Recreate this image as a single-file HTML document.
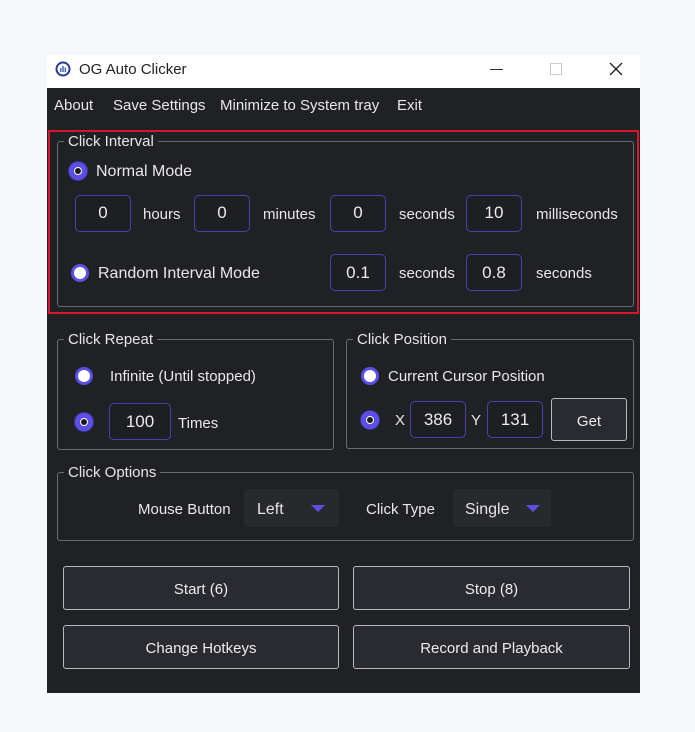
<!DOCTYPE html>
<html><head><style>
*{margin:0;padding:0;box-sizing:border-box}
body{width:695px;height:732px;background:#f5f9fc;position:relative;font-family:"Liberation Sans",sans-serif;overflow:hidden}
.a{position:absolute}
#win{left:47px;top:55px;width:593px;height:638px;background:#202124}
#title{left:47px;top:55px;width:593px;height:33px;background:#fff}
.t{position:absolute;color:#e8e8e8;font-size:15px;white-space:nowrap;line-height:18px}
.grp{position:absolute;border:1px solid #6a6b6e;border-radius:3px}
.gl{position:absolute;background:#202124;padding:0 4px;color:#e6e6e6;font-size:15px;line-height:18px}
.box{position:absolute;border:1.5px solid #4b3fb0;border-radius:5px;color:#ececec;font-size:17px;text-align:center;background:#1e1f22}
.rs{position:absolute;width:18px;height:18px;border-radius:50%;background:#fff;border:5px solid #5b4fe6;box-shadow:0 0 0 1px #3d3499}
.rs::after{content:"";position:absolute;left:1px;top:1px;width:6px;height:6px;border-radius:50%;background:#1a1a1e}
.ru{position:absolute;width:18px;height:18px;border-radius:50%;background:#fff;border:3px solid #5b4fe6}
.btn{position:absolute;border:1.5px solid #b8b8bc;border-radius:3px;background:#2a2b30;color:#ececec;font-size:15px;text-align:center}
.dd{position:absolute;background:#28292d;border-radius:4px;color:#e6e6e6;font-size:16px}
.tri{position:absolute;width:0;height:0;border-left:7px solid transparent;border-right:7px solid transparent;border-top:7px solid #5b4fe6}
</style></head><body>
<div class="a" id="win"></div>
<div class="a" id="title"></div>
<svg class="a" style="left:55px;top:61px" width="16" height="16" viewBox="0 0 16 16"><circle cx="8" cy="8" r="7.5" fill="#2a3a8a"/><circle cx="8" cy="8" r="5.5" fill="#fff"/><rect x="5" y="7" width="1.5" height="4" fill="#3a6ad0"/><rect x="7.3" y="5" width="1.5" height="6" fill="#3a6ad0"/><rect x="9.6" y="6.5" width="1.5" height="4.5" fill="#3a6ad0"/></svg>
<div class="t" style="left:79px;top:61px;color:#222;font-size:15px">OG Auto Clicker</div>
<div class="a" style="left:490px;top:69px;width:13px;height:1px;background:#333"></div>
<div class="a" style="left:550px;top:63px;width:12px;height:12px;border:1px solid #ccc"></div>
<svg class="a" style="left:609px;top:62px" width="14" height="14"><path d="M1 1L13 13M13 1L1 13" stroke="#222" stroke-width="1.4"/></svg>
<div class="t" style="left:54px;top:97px">About</div>
<div class="t" style="left:113px;top:97px">Save Settings</div>
<div class="t" style="left:220px;top:97px">Minimize to System tray</div>
<div class="t" style="left:397px;top:97px">Exit</div>

<div class="a" style="left:48px;top:130px;width:591px;height:184px;border:2px solid #d4182a"></div>
<div class="grp" style="left:57px;top:141px;width:577px;height:166px"></div>
<div class="gl" style="left:64px;top:133px">Click Interval</div>
<div class="rs" style="left:69px;top:162px"></div>
<div class="t" style="left:96px;top:163px;font-size:16px">Normal Mode</div>
<div class="box" style="left:75px;top:195px;width:56px;height:37px;line-height:34px">0</div>
<div class="t" style="left:143px;top:206px">hours</div>
<div class="box" style="left:194px;top:195px;width:56px;height:37px;line-height:34px">0</div>
<div class="t" style="left:263px;top:206px">minutes</div>
<div class="box" style="left:330px;top:195px;width:56px;height:37px;line-height:34px">0</div>
<div class="t" style="left:399px;top:206px">seconds</div>
<div class="box" style="left:466px;top:195px;width:56px;height:37px;line-height:34px">10</div>
<div class="t" style="left:536px;top:206px">milliseconds</div>
<div class="ru" style="left:71px;top:264px"></div>
<div class="t" style="left:98px;top:265px;font-size:16px">Random Interval Mode</div>
<div class="box" style="left:330px;top:254px;width:56px;height:37px;line-height:36px">0.1</div>
<div class="t" style="left:399px;top:265px">seconds</div>
<div class="box" style="left:466px;top:254px;width:56px;height:37px;line-height:36px">0.8</div>
<div class="t" style="left:536px;top:265px">seconds</div>

<div class="grp" style="left:57px;top:339px;width:277px;height:111px"></div>
<div class="gl" style="left:64px;top:331px">Click Repeat</div>
<div class="ru" style="left:75px;top:367px"></div>
<div class="t" style="left:110px;top:368px">Infinite (Until stopped)</div>
<div class="rs" style="left:75px;top:413px"></div>
<div class="box" style="left:109px;top:403px;width:62px;height:37px;line-height:36px">100</div>
<div class="t" style="left:178px;top:415px">Times</div>

<div class="grp" style="left:346px;top:339px;width:288px;height:110px"></div>
<div class="gl" style="left:353px;top:331px">Click Position</div>
<div class="ru" style="left:361px;top:367px"></div>
<div class="t" style="left:388px;top:368px">Current Cursor Position</div>
<div class="rs" style="left:361px;top:411px"></div>
<div class="t" style="left:395px;top:412px">X</div>
<div class="box" style="left:410px;top:401px;width:56px;height:37px;line-height:36px">386</div>
<div class="t" style="left:471px;top:412px">Y</div>
<div class="box" style="left:487px;top:401px;width:56px;height:37px;line-height:36px">131</div>
<div class="btn" style="left:551px;top:398px;width:76px;height:43px;line-height:45px">Get</div>

<div class="grp" style="left:57px;top:472px;width:577px;height:69px"></div>
<div class="gl" style="left:64px;top:464px">Click Options</div>
<div class="t" style="left:138px;top:501px">Mouse Button</div>
<div class="dd" style="left:244px;top:489px;width:95px;height:38px;padding:12px 0 0 13px">Left</div>
<div class="tri" style="left:311px;top:505px"></div>
<div class="t" style="left:366px;top:501px">Click Type</div>
<div class="dd" style="left:453px;top:489px;width:98px;height:38px;padding:12px 0 0 12px">Single</div>
<div class="tri" style="left:526px;top:505px"></div>

<div class="btn" style="left:63px;top:566px;width:276px;height:44px;line-height:45px">Start (6)</div>
<div class="btn" style="left:353px;top:566px;width:277px;height:44px;line-height:45px">Stop (8)</div>
<div class="btn" style="left:63px;top:625px;width:276px;height:44px;line-height:45px">Change Hotkeys</div>
<div class="btn" style="left:353px;top:625px;width:277px;height:44px;line-height:45px">Record and Playback</div>
</body></html>
